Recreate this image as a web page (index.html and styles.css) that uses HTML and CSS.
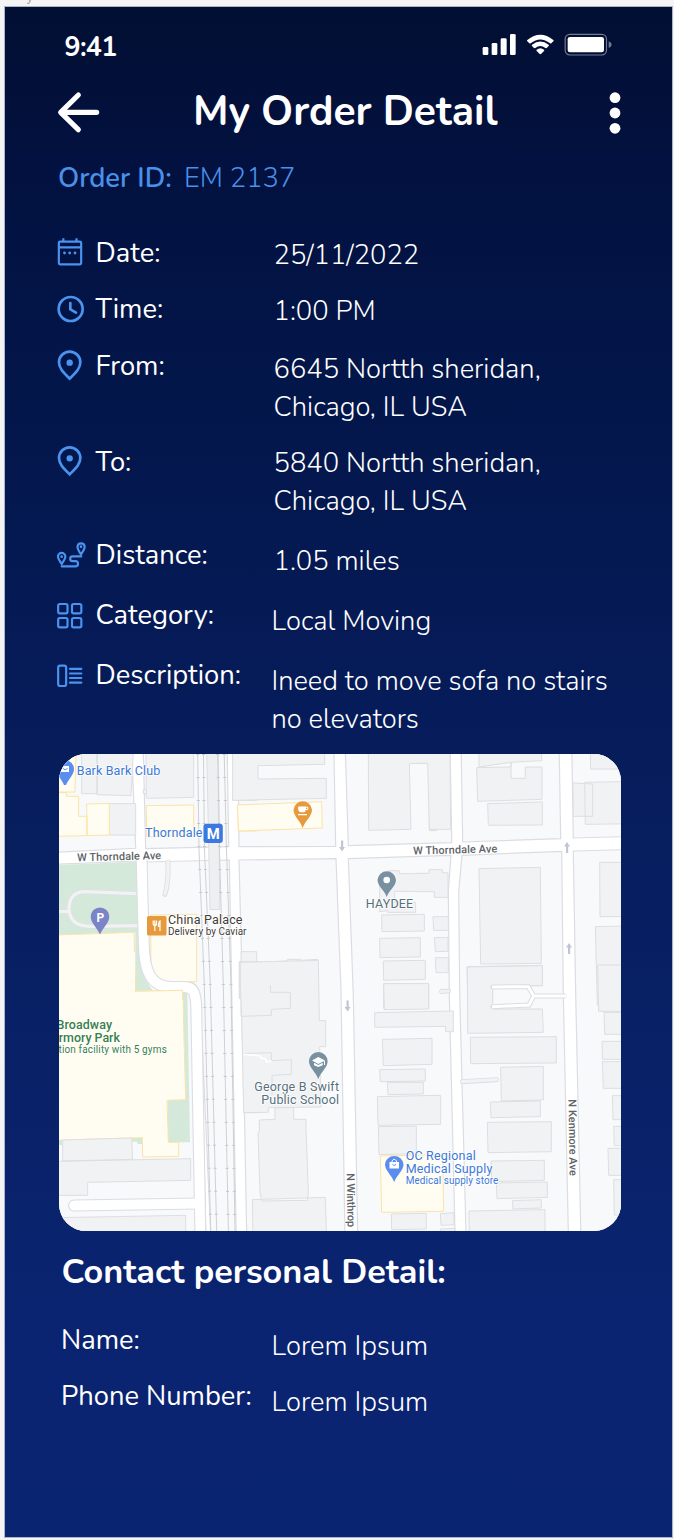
FILE: index.html
```html
<!DOCTYPE html>
<html lang="en">
<head>
<meta charset="utf-8">
<title>My Order Detail</title>
<link rel="stylesheet" href="styles.css">
</head>
<body>
<div class="frame-name"><span>y</span></div>
<main class="phone">
  <div class="status">
    <span class="clock">9:41</span>
    <svg class="status-icons" viewBox="436 99 393 72" width="131" height="24">
      <g fill="#fff">
        <rect x="438" y="141" width="17" height="24" rx="4"/>
        <rect x="465" y="129" width="17" height="36" rx="4"/>
        <rect x="492" y="115" width="18" height="50" rx="4"/>
        <rect x="520" y="102" width="17" height="63" rx="4"/>
        <path d="M572 120Q611 89 650 120Q652 122 650 124L644 130Q642 131 640 130Q611 107 582 130Q580 131 578 130L572 124Q570 122 572 120Z"/>
        <path d="M586 134Q611 115 636 134Q638 136 636 138L630 144Q628 145 626 144Q611 132 596 144Q594 145 592 144L586 138Q584 136 586 134Z"/>
        <path d="M600 149Q611 140 622 149Q624 151 622 153L613 162Q611 163 609 162L600 153Q598 151 600 149Z"/>
        <rect x="693" y="111" width="109" height="46" rx="7"/>
        <path d="M816 124Q825 128 825 134Q825 140 816 144Z" opacity=".45"/>
      </g>
      <rect x="685.500" y="103" width="124" height="62" rx="14" fill="none" stroke="#fff" stroke-opacity=".45" stroke-width="3.500"/>
    </svg>
  </div>

  <header class="bar">
    <svg viewBox="170 273 132 129" width="44" height="43"><path d="M289 337H182M234 285L181 337L234 389" fill="none" stroke="#fff" stroke-width="15.500" stroke-linecap="round" stroke-linejoin="round"/></svg>
    <h1>My Order Detail</h1>
    <svg class="more" viewBox="0 0 12 43" width="12" height="43" fill="#fff"><circle cx="6" cy="6.700" r="5.400"/><circle cx="6" cy="22" r="5.400"/><circle cx="6" cy="37.300" r="5.400"/></svg>
  </header>

  <p class="order-id"><b>Order ID:</b><span>EM 2137</span></p>

  <dl class="details">
    <div class="row date">
      <dt><svg class="icon" viewBox="48 39 90 90"><rect x="56.500" y="50" width="67" height="68" rx="4"/><path d="M56 67H124M70 40V50M109.500 40V50"/><g class="solid"><circle cx="73.500" cy="84" r="4.200"/><circle cx="89" cy="84" r="4.200"/><circle cx="105" cy="84" r="4.200"/></g></svg>Date:</dt>
      <dd>25/11/2022</dd>
    </div>
    <div class="row time">
      <dt><svg class="icon" viewBox="48 207 90 90"><circle class="heavy" cx="92" cy="252" r="36"/><path class="heavy" d="M91 234V253L108 263" stroke-linecap="round"/></svg>Time:</dt>
      <dd>1:00 PM</dd>
    </div>
    <div class="row from">
      <dt><svg class="icon" viewBox="48 378 90 90"><path class="heavy" d="M89 461C70 442 57 430 57 412A32 32 0 0 1 121 412C121 430 108 442 89 461Z"/><circle class="solid" cx="89" cy="413" r="9.500"/></svg>From:</dt>
      <dd>6645 Nortth sheridan,<br>Chicago, IL USA</dd>
    </div>
    <div class="row to">
      <dt><svg class="icon" viewBox="48 379 90 90"><path class="heavy" d="M89 461C70 442 57 430 57 412A32 32 0 0 1 121 412C121 430 108 442 89 461Z"/><circle class="solid" cx="89" cy="413" r="9.500"/></svg>To:</dt>
      <dd>5840 Nortth sheridan,<br>Chicago, IL USA</dd>
    </div>
    <div class="row distance">
      <dt><svg class="icon" viewBox="48 30 90 90"><path d="M65 102C58 92 54 86 54 79.500A11 11 0 0 1 76 79.500C76 86 72 92 65 102ZM123 73C116 63 112.500 57 112.500 50A10.800 10.800 0 0 1 134 50C134 57 130 63 123 73Z"/><path d="M65 109H106Q114 109 114 101Q114 93.500 106 93.500H98Q90.500 93.500 90.500 86Q90.500 79 98 79H124" stroke-linecap="round"/><g class="solid"><circle cx="65" cy="80" r="4"/><circle cx="123" cy="50" r="4"/></g></svg>Distance:</dt>
      <dd>1.05 miles</dd>
    </div>
    <div class="row category">
      <dt><svg class="icon" viewBox="48 210 90 90"><rect x="54.500" y="222" width="28" height="28" rx="5"/><rect x="96" y="222" width="28" height="28" rx="5"/><rect x="54.500" y="264" width="28" height="28" rx="5"/><rect x="96" y="264" width="28" height="28" rx="5"/></svg>Category:</dt>
      <dd>Local Moving</dd>
    </div>
    <div class="row description">
      <dt><svg class="icon" viewBox="48 390 90 90"><rect x="54.500" y="407" width="24" height="61" rx="6"/><path d="M90 416.500H124M90 430.500H124M90 444H124M90 458H124" stroke-linecap="round"/></svg>Description:</dt>
      <dd>Ineed to move sofa no stairs<br>no elevators</dd>
    </div>
  </dl>

  <svg class="map" viewBox="59 754 562 477" width="562" height="477">
    <rect x="59" y="754" width="562" height="477" fill="#fff"/>
    <!-- city blocks between the streets -->
    <g class="block">
      <path d="M50 740H131.300L135.700 848.300L50 852.500Z"/>
      <path d="M143 740L145.700 848.700L228.700 846.700L227 740Z"/>
      <path d="M238 740L239 846.700L335.700 846.300L333.700 740Z"/>
      <path d="M345 740L348.300 845.700L451.700 842.700L450 740Z"/>
      <path d="M461 740L462.700 842L560.700 838.700L559 740Z"/>
      <path d="M571.700 740L573.300 838L630 836.500V740Z"/>
      <path d="M50 864.500L136 861L138.300 945L160 975L200 985L206 1240H50Z"/>
      <path d="M146.300 862L229.300 860L236.300 1240H211L200 995Q198 982 188 982H165Q150 981 149 955Z"/>
      <path d="M239 860L336 858.700L341 990L345 1240H246.800L241.700 962Z"/>
      <path d="M348.300 858.700L451 855.300L448.300 891L449.300 995L455.200 1240H357.800L353.300 995Z"/>
      <path d="M462 855.300L561.700 851.300L563.300 993L568.500 1240H466.200L459.700 995L458.700 892Z"/>
      <path d="M573.300 851L630 849.500V1240H581L575.700 995Z"/>
    </g>

    <!-- upper left -->
    <g transform="translate(50 745) scale(.33333)">
      <path class="park" d="M20 360L257 350L265 600Q268 690 310 738L256 738V562L20 570Z"/>
      <g class="bld">
        <path d="M95 90V146H141V20H250L243 152L142 149M95 90V20H141V149M178 176H257V270H178ZM288 20H431V157L289 160ZM288 134H280V146H289M548 20H620V166H548ZM568 650H620V760H568Z"/>
      </g>
      <g class="shop">
        <path d="M20 20H78L75 141H20ZM20 143H50V154H86V214H111V272L20 274ZM110 177L178 175V270L111 272ZM289 182L431 180V270L290 276ZM563 180H620V258H565ZM20 570L252 562L257 739H399V760H20ZM302 510L440 508V710L303 712Z"/>
      </g>
      <path d="M264 446L100 440Q58 444 57 490Q58 544 120 544L268 542M20 500H56" fill="none" stroke="#dcdde1" stroke-width="13"/>
      <path d="M266 446L100 440Q58 444 57 490Q58 544 120 544L270 542M20 500H56" fill="none" stroke="#f1f2f4" stroke-width="10"/>
      <path d="M354 350V390Q352 425 345 448" class="lane-edge"/>
      <path d="M354 346V390Q352 425 345 447" class="lane"/>
    </g>

    <!-- lower left -->
    <g transform="translate(50 985) scale(.33333)">
      <path class="park" d="M398 24H412L420 472H353V345H407ZM244 456H277V477H262V470H244ZM20 465H38V480H20Z"/>
      <path class="shop" d="M20 -100H255V17H398L407 344L351 346L355 472H385V514L278 516L277 458L20 466Z" stroke="none"/>
      <path d="M257 -30V19L398 16L407 344L351 346L355 472H386V514L278 516L277 458L20 466" fill="none" stroke="#fbe3a8" stroke-width="3"/>
      <g class="bld">
        <path d="M38 465L245 459L248 523L38 528ZM20 529L422 521V586L113 592V631H20ZM20 698L407 691V760H20ZM573 -100H620V94H573ZM575 94H620V206H578ZM578 206H620V383H582Z"/>
      </g>
    </g>

    <!-- alley beside the tracks and the dead-end street -->
    <path class="street-edge" d="M141.500 860L143.800 945C144.500 972 151 987 172 987H184C193 987 195 992 196.200 1004L200.500 1240"/>
    <path class="street-edge" d="M74 1205.500L199 1203.500"/>
    <path class="street" d="M141.500 855L143.800 945C144.500 972 151 987 172 987H184C193 987 195 992 196.200 1004L200.500 1240"/>
    <path class="street" d="M74 1205.500L199 1203.500"/>
    <path class="shop" d="M136 991H182.500L183 1020H136Z" stroke="none"/>
    <path d="M135.700 991.300L182.700 990.300V1000" fill="none" stroke="#fbe3a8"/>

    <!-- railway -->
    <path d="M206.700 750H218.500L219.700 909.500H210Z" fill="#eeeff1" stroke="#dddee1"/>
    <g class="rail"><path d="M197.700 754L199 850L204.300 985L210.700 1231"/><path d="M203.500 754L204.500 850L210.300 985L216.700 1231"/><path d="M217.700 754L219.500 850L223.300 985L228.400 1231"/><path d="M224.200 754L226.500 850L231 985L235 1231"/></g>
    <g class="ties"><path d="M197.700 754L199 850L204.300 985L210.700 1231"/><path d="M203.500 754L204.500 850L210.300 985L216.700 1231"/><path d="M217.700 754L219.500 850L223.300 985L228.400 1231"/><path d="M224.200 754L226.500 850L231 985L235 1231"/></g>

    <!-- upper middle -->
    <g transform="translate(230 745) scale(.33333)">
      <g class="bld">
        <path d="M8 20H284V58L84 62V102L289 100V160L8 166ZM415 20H620V257H598V55L538 56L543 253L416 256ZM28 650L108 651L172 648V643H211V646L263 643L266 760H28ZM108 651V690H97V702H121V745H182V760M449 500V398H475V377H508V386H600V439H494V472H557V502H473V497ZM455 510L583 508V558L456 560ZM449 580L571 578V636L450 638ZM460 648L586 646V703L461 706ZM461 716H596V790H461Z"/>
      </g>
      <path class="shop" d="M22 180L275 170L277 249L26 258Z"/>
    </g>

    <!-- upper right -->
    <g transform="translate(425 745) scale(.33333)">
      <g class="bld">
        <path d="M-31 20H75L77 253H13L8 55H-26M162 20H350V47L258 52V100H301V66H351V163L158 169L155 68L258 66V52L162 66ZM188 176L352 171V240L190 241ZM496 20H640V72H497ZM444 114L503 117V214H445ZM479 112L640 109V236L481 238ZM162 371L346 367L349 655L167 657ZM126 665L352 661V722L203 725V760H128ZM524 352H640V514L525 515ZM511 545L640 542V780H517ZM-30 385H12V374H52V383L69 384V457H28V440H-30M24 515H70V556H26ZM28 578L69 577V619L31 620ZM31 638H70V683H33Z"/>
      </g>
      <path d="M-40 387H20V438H-40Z" fill="#f1f2f4"/>
    </g>

    <!-- lower middle -->
    <g transform="translate(230 985) scale(.33333)">
      <g class="bld">
        <path d="M31 -68L265 -74L268 107H287V185H269L273 366L135 368V403L88 405V440L84 442L90 620L95 648L232 646L235 620L228 430V403H191V368H115V382L41 383L35 94L31 0ZM121 0L122 22H181V70L124 73V91L35 94M38 206L124 203V227L184 224V268L126 271V330M67 644L286 637L290 760H69ZM461 -4H596V72L463 74ZM434 83L670 78V140H647V124L434 127ZM457 163L606 160V238L460 242ZM449 254L586 252V288L451 290ZM472 292H580V327L474 329ZM442 335L632 331V418L444 421ZM445 425L559 423V506L447 509ZM484 687L589 685V732L485 734Z"/>
      </g>
      <path d="M40 208L90 212L92 219L106 221L110 231L125 228" fill="none" stroke="#fff" stroke-width="5"/>
      <path class="shop" d="M451 513L638 509L641 679L455 682Z"/>
    </g>

    <!-- lower right -->
    <g transform="translate(425 985) scale(.33333)">
      <g class="bld">
        <path d="M127 -54L352 -58V2H203V72H352L355 142L128 145ZM136 157L394 155V234L137 236ZM227 247L355 244V345L229 348ZM196 351L346 348V395L198 398ZM187 412L379 410V500L189 503ZM198 528L358 526V586L200 590ZM214 594L367 591V637L216 641ZM262 647L349 644V669L264 672ZM132 678L360 674V760H133ZM518 -60H640V79H521ZM537 82H640V148H539ZM531 169H640V223H532ZM532 230H640V310H535ZM562 332H640V404H564ZM566 424H640V482H568ZM549 490H640V571H551ZM566 584H640V690H568ZM46 686L87 683V719L48 721ZM46 732L89 730V760H46ZM75 18L76 13L48 13Q38 19 48 26L76 23Z"/>
      </g>
      <path class="lane-edge" d="M203 6L310 5L326 33L312 60L203 65M326 33H418"/>
      <path d="M201 6L310 5L326 33L312 60L201 65M326 33H425" fill="none" stroke="#fff" stroke-width="9"/>
      <path class="lane-edge" d="M112 290L214 284"/>
      <path class="lane" d="M112 290L214 284"/>
    </g>

    <!-- one-way arrows -->
    <g fill="#bfc4d6">
      <path id="a" d="M341 840.500H343.200V847H345L342.100 851.500L339 847H341Z"/>
      <use href="#a" x="5.500" y="160"/>
      <path id="b" d="M566 853V846.500H564L567 842L570 846.500H568.200V853Z"/>
      <use href="#b" x="2" y="101"/>
    </g>

    <!-- pins -->
    <g>
      <path d="M56 769A9 9 0 0 1 74 769C74 775 69 778 66 785H64C61 778 56 775 56 769Z" fill="#5a8df0"/>
      <path d="M61 766H69V772H61Z" fill="#fff"/><path d="M63 768.500Q65 771 67.500 768.500" stroke="#5a8df0" fill="none"/>
      <path d="M293.500 809.700A9.300 9.300 0 0 1 312 809.700C312 816 305 821 302.700 828C300.500 821 293.500 816 293.500 809.700Z" fill="#e79a3c"/>
      <path d="M298.200 806.500H306V809.500Q305.500 812.300 303.500 812.300H301Q298.200 812 298.200 809ZM298 814H307V815.300H298Z" fill="#fff"/>
      <path d="M305.500 807.200H307.800V809.500H305.500" fill="none" stroke="#fff"/>
      <path d="M90.700 916.700A9.300 9.300 0 0 1 109.300 916.700C109.300 923 102.500 928 100 934.500C97.500 928 90.700 923 90.700 916.700Z" fill="#7c84c8"/>
      <path d="M377.500 879.700A9.300 9.300 0 0 1 396 879.700C396 886 389 890 386.700 897C384.500 890 377.500 886 377.500 879.700Z" fill="#7890a0"/>
      <circle cx="386.700" cy="880" r="3.300" fill="#fff"/>
      <path d="M309 1061.300A9.300 9.300 0 0 1 327.600 1061.300C327.600 1067.500 321 1072 318.300 1079C315.700 1072 309 1067.500 309 1061.300Z" fill="#7890a0"/>
      <path d="M318.300 1057L325 1060.500L318.300 1064L312 1060.500ZM314 1062.700L318.300 1065L322.700 1062.700V1065.200L318.300 1067L314 1065.200ZM324 1061H325V1065H324Z" fill="#fff"/>
      <path d="M385 1164.300A9.300 9.300 0 0 1 403.500 1164.300C403.500 1170.500 397 1175 394.200 1182C391.500 1175 385 1170.500 385 1164.300Z" fill="#5a8df0"/>
      <path d="M389.500 1162H399V1168.500H389.500Z" fill="#fff"/><path d="M392 1162.500V1161Q394.200 1157.500 396.500 1161V1162.500" fill="none" stroke="#fff"/><path d="M392.500 1164.300Q394.200 1167 396 1164.300" fill="none" stroke="#5a8df0"/>
      <rect x="147" y="916" width="19.500" height="19.500" rx="1.500" fill="#e79a3c"/>
      <path d="M153.200 920.500V924.500Q154.700 926.500 156.500 924.500V920.500M154.800 920.500V931M160 931V921Q158.500 922 158.500 926.500H160" fill="none" stroke="#fff" stroke-width="1.200"/>
      <rect x="203.500" y="823.700" width="19.300" height="19.300" rx="3" fill="#3b78e0"/>
    </g>
    <g class="place">
      <text class="badge-m" x="206.700" y="839" textLength="13" lengthAdjust="spacingAndGlyphs">M</text>
      <text class="badge-p" x="96.500" y="921.500">P</text>
      <text class="blue" x="76.700" y="775.300" textLength="83.500">Bark Bark Club</text>
      <text class="blue" x="145" y="836.700" textLength="57.500">Thorndale</text>
      <text class="road" x="77.300" y="861.300" textLength="84" transform="rotate(-1.500 77 861)">W Thorndale Ave</text>
      <text class="road" x="413.300" y="854.600" textLength="84" transform="rotate(-1.500 413 854)">W Thorndale Ave</text>
      <text class="dark" x="168" y="923.800" textLength="74.500">China Palace</text>
      <text class="dark small" x="168" y="934.700" textLength="78.500">Delivery by Caviar</text>
      <text class="slate" x="365.700" y="908.300" textLength="47.500">HAYDEE</text>
      <text class="green" x="56.500" y="1029.200" textLength="55.500">Broadway</text>
      <text class="green" x="58.700" y="1042" textLength="61.300">rmory Park</text>
      <text class="green small" x="58.500" y="1053" textLength="108.300">tion facility with 5 gyms</text>
      <text class="slate" x="254.300" y="1090.800" textLength="84.700">George B Swift</text>
      <text class="slate" x="261.300" y="1103.600" textLength="77.700">Public School</text>
      <text class="blue" x="405.700" y="1160.200" textLength="70">OC Regional</text>
      <text class="blue" x="405.700" y="1173" textLength="86.700">Medical Supply</text>
      <text class="blue small" x="405.700" y="1184.200" textLength="92.700">Medical supply store</text>
      <text class="road" textLength="54" transform="translate(346.700 1173.300) rotate(89)">N Winthrop</text>
      <text class="road" textLength="76.500" transform="translate(568.500 1099.300) rotate(89.200)">N Kenmore Ave</text>
    </g>
  </svg>

  <h2>Contact personal Detail:</h2>
  <dl class="contact">
    <div class="row"><dt>Name:</dt><dd>Lorem Ipsum</dd></div>
    <div class="row"><dt>Phone Number:</dt><dd>Lorem Ipsum</dd></div>
  </dl>
</main>
</body>
</html>
```
FILE: styles.css
```css
* { box-sizing: border-box; }
body {
  margin: 0;
  height: 1540px;
  overflow: hidden;
  background: #f4f4f4;
  color: #fff;
  font-family: Nunito, Lato, sans-serif;
}
.frame-name {
  height: 7px;
  padding-left: 26px;
  overflow: hidden;
  color: #a9a9a9;
  font: 14px/14px Inter, sans-serif;
}
.frame-name span { display: block; margin-top: -11px; }

.phone {
  display: flex;
  flex-direction: column;
  width: 666.500px;
  height: 1530px;
  margin-left: 5px;
  background: linear-gradient(#020f33 0%, #02113f 10%, #03164a 25%, #061c5a 46%, #09226a 75%, #0a2472 88%, #092470 100%);
  box-shadow: 0 0 0 1px #a9b4cf;
}

.status { display: flex; flex: none; justify-content: space-between; height: 75px; padding: 22px 59px 0 59.500px; }
.clock { font-size: 26.800px; font-weight: 700; line-height: 37px; letter-spacing: -.7px; }
.status-icons { margin-top: 4px; }

.bar { display: flex; flex: none; align-items: flex-start; height: 70px; padding: 9px 51px 0 51.500px; }
h1 { flex: 1; margin: -7px 0 0 92.500px; font-size: 40.900px; font-weight: 700; line-height: 56px; white-space: nowrap; }

.order-id { display: flex; flex: none; height: 75px; margin: 0; padding: 7px 0 0 53px; color: #4a90e8; font-size: 27.300px; line-height: 38px; }
.order-id b { width: 126px; font-weight: 600; }
.order-id span { font-weight: 300; }

dl, dd { margin: 0; }
.row { display: flex; font-size: 27.300px; line-height: 38px; white-space: nowrap; }
dt { display: flex; flex: none; }
dd { font-weight: 300; }

.details { flex: none; height: 527px; padding: 7px 0 0 51px; }
.details dt { width: 217.500px; gap: 9.600px; }
.icon {
  width: 30px; height: 30px; margin-top: 4px; overflow: visible;
  fill: none; stroke: #4a94f0; stroke-width: 6.500;
}
.icon .heavy { stroke-width: 8; }
.icon .solid { fill: #4a94f0; stroke: none; }
.date { height: 56px; }
.time { height: 57px; }
.from { height: 96px; }
.to { height: 93px; }
.distance, .category { height: 60px; }
.details dd { padding-top: 2px; }
.details .from dd { padding-top: 3px; }
.details .to dd { padding-top: 1px; }
.details .distance dd { padding-top: 6px; }
.details .category dd, .details .description dd { margin-left: -2px; padding-top: 6px; }

.map { flex: none; margin-left: 54px; border-radius: 27px; }
.block path { fill: #f8f9fb; stroke: #dcdde3; stroke-width: 1.200; }
.bld path { fill: #f1f2f4; stroke: #dddee1; stroke-width: 3; }
.shop, .shop path { fill: #fffcf1; stroke: #fbe3a8; stroke-width: 3; }
.shop[stroke="none"] { stroke: none; }
.park { fill: #d5e9da; }
.lane-edge { fill: none; stroke: #dcdde1; stroke-width: 15; stroke-linecap: round; }
.lane { fill: none; stroke: #f1f2f4; stroke-width: 10; stroke-linecap: round; }
.street-edge { fill: none; stroke: #dcdde3; stroke-width: 12; stroke-linecap: round; }
.street { fill: none; stroke: #fff; stroke-width: 9.800; stroke-linecap: round; }
.rail path { fill: none; stroke: #cfd0d4; stroke-width: 1; }
.ties path { fill: none; stroke: #c6c7cc; stroke-width: 3; stroke-dasharray: 1 22; }
.place { font: 12.500px Roboto, sans-serif; }
.place text { paint-order: stroke; stroke: #fff; stroke-width: 1.500px; stroke-linejoin: round; }
.place .small { font-size: 10px; font-weight: 400; }
.blue { fill: #3b78d8; }
.dark { fill: #3f3d3b; }
.slate { fill: #566f7b; }
.green { fill: #38804a; font-weight: 500; }
.road { fill: #606367; font-size: 11px; font-weight: 500; }
.place .badge-m { fill: #fff; stroke: none; font-size: 15px; font-weight: 700; }
.place .badge-p { fill: #fff; stroke: none; font-size: 12px; font-weight: 700; }

h2 { margin: 17px 0 0 56.500px; font-size: 34.200px; font-weight: 700; line-height: 48px; white-space: nowrap; }
.contact { padding: 25px 0 0 56px; }
.contact .row { height: 56px; }
.contact dt { width: 210.500px; }
.contact dd { padding-top: 6px; }
```
